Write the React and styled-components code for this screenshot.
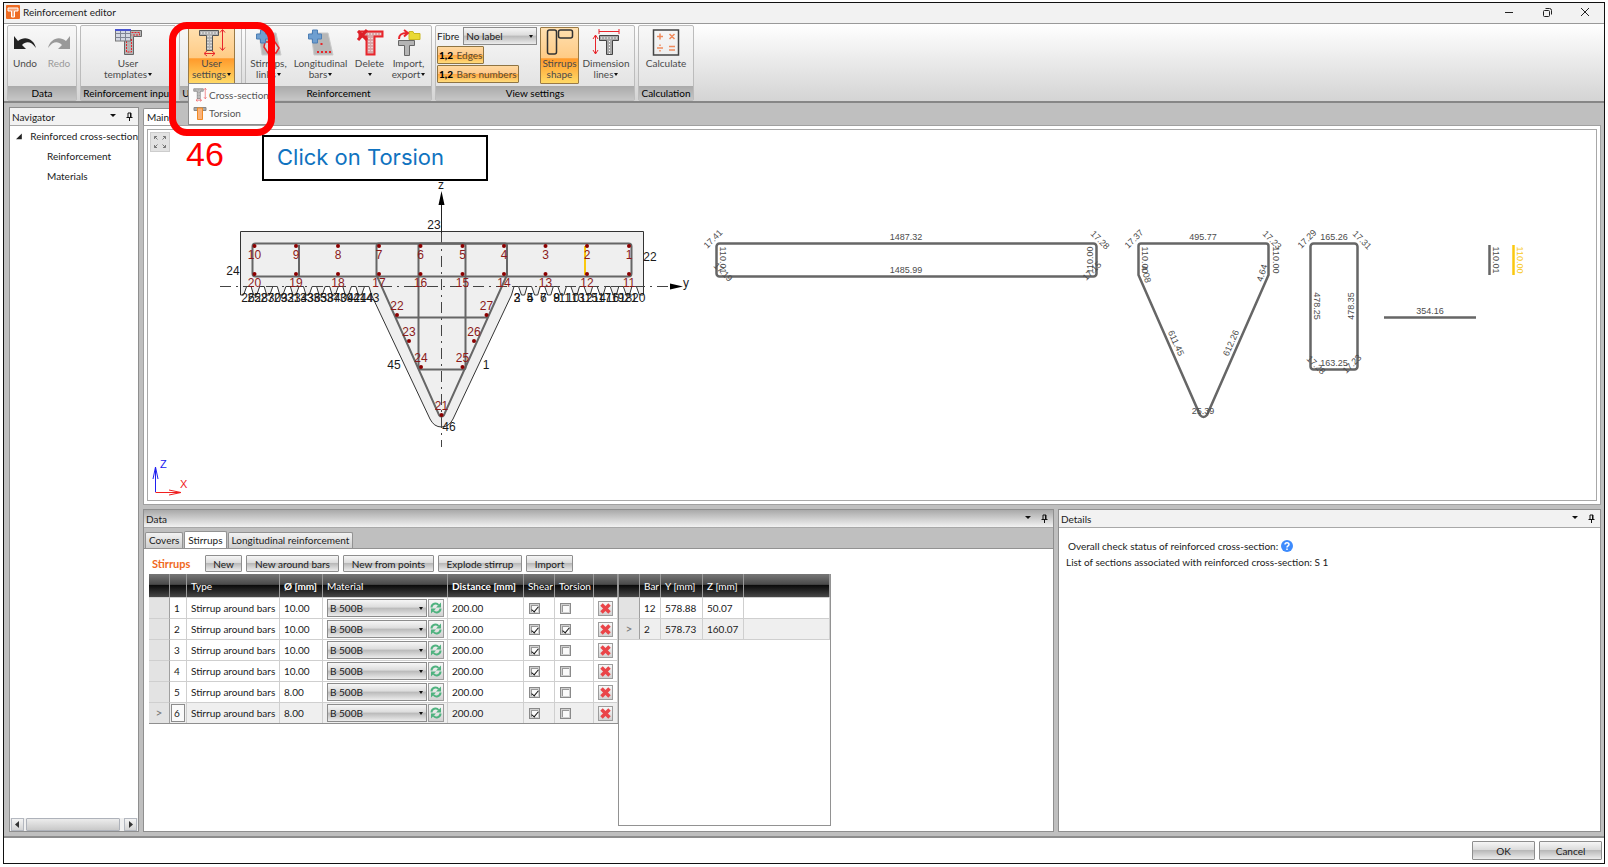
import React, { useState } from 'react';
import styled, { createGlobalStyle, css } from 'styled-components';

const GlobalStyle = createGlobalStyle`
  * {
    box-sizing: border-box;
  }

  body {
    margin: 0;
    background: #fff;
    color: #1a1a1a;
    font-family: Lato, 'Open Sans', sans-serif;
    font-size: 10px;
    line-height: 12px;
  }

  button, select, input {
    font: inherit;
    color: inherit;
    margin: 0;
  }
`;

const glossy = 'linear-gradient(#f6f6f6 0%, #dcdcdc 45%, #b9b9b9 50%, #ececec 100%)';
const orangeGlossy = 'linear-gradient(#ffe0b0 0%, #ffcb85 54%, #ff9a2b 56%, #ffd966 100%)';

const Page = styled.div`
  display: flex;
  min-height: 100vh;
  padding: 2px 3px 3px;
`;

const Window = styled.div`
  position: relative;
  display: flex;
  flex-direction: column;
  flex: 1;
  min-width: 0;
  border: 1px solid #111;
  background: #fff;
`;

const TitleBar = styled.header`
  display: flex;
  align-items: center;
  height: 21px;
  padding: 0 14px 2px 2px;
  background: #f2f2f2;
  border-bottom: 1px solid #999;
`;

const Title = styled.h1`
  flex: 1;
  margin: 0 0 0 3px;
  font-size: 10px;
  font-weight: 400;
`;

const WindowButtons = styled.div`
  display: flex;
  gap: 28px;
`;

const PlainButton = styled.button`
  display: flex;
  padding: 0;
  border: 0;
  background: none;
`;

const Ribbon = styled.div`
  display: flex;
  gap: 3px;
  padding: 1px 3px 0;
  background: linear-gradient(#fff, #d4d4d4);
  border-bottom: 2px solid #868686;
`;

const Group = styled.section`
  display: flex;
  flex-direction: column;
  width: ${props => props.$width}px;
  height: 76px;
  border: 1px solid #bcbcbc;
  border-radius: 2px;
  background: linear-gradient(#f8f8f8, #dedede);
`;

const GroupBody = styled.div`
  display: flex;
  flex: 1;
  justify-content: ${props => props.$align || 'center'};
  padding: 1px ${props => props.$pad || 0}px;
`;

const GroupLabel = styled.div`
  height: 14px;
  overflow: hidden;
  line-height: 14px;
  text-align: center;
  white-space: nowrap;
  color: #000;
  background: linear-gradient(#aaa, #c6c6c6);
`;

const RibbonButton = styled.button`
  display: flex;
  flex-direction: column;
  align-items: center;
  flex: none;
  width: ${props => props.$width}px;
  height: 57px;
  padding: 1px 0 0;
  border: 1px solid transparent;
  border-radius: 1px;
  background: none;
  line-height: 11px;
  color: ${props => (props.$dim ? '#9a9a9a' : '#4a4a4a')};
  white-space: nowrap;

  svg {
    margin-bottom: 1px;
  }

  ${props => props.$active && css`
    border-color: #9a7a45;
    background: ${orangeGlossy};
  `}
`;

const Caret = styled.span`
  display: inline-block;
  margin: 0 0 2px 1px;
  border: ${props => (props.$wide ? 3 : 2)}px solid transparent;
  border-top: 3px solid #111;
  border-bottom: 0;
`;

const ViewColumn = styled.div`
  display: flex;
  flex-direction: column;
  align-items: flex-start;
  gap: 1px;
  width: 103px;
`;

const FibreLabel = styled.label`
  display: flex;
  align-items: center;
  gap: 4px;
  width: 100px;
`;

const SelectBox = styled.span`
  position: relative;
  display: flex;
  flex: 1;
  min-width: 0;

  &::after {
    content: '';
    position: absolute;
    top: 8px;
    right: 4px;
    border: 2px solid transparent;
    border-top: 3px solid #111;
    border-bottom: 0;
    pointer-events: none;
  }
`;

const Select = styled.select`
  appearance: none;
  width: 100%;
  height: 18px;
  padding: 0 10px 0 2px;
  border: 1px solid #8c8c8c;
  border-radius: 0;
  background: ${glossy};
`;

const Toggle = styled.button`
  height: 18px;
  padding: 0 1px;
  border: 1px solid #8f7443;
  border-radius: 1px;
  background: linear-gradient(#ffd9a0 0%, #ffc98a 48%, #ffa63f 52%, #ffdc7c 100%);
  color: #5a4a30;

  b {
    margin-right: 1px;
    font-weight: 900;
    color: #000;
  }
`;

const Workspace = styled.main`
  display: grid;
  flex: 1;
  grid-template-columns: 130px minmax(0, 1fr);
  gap: 4px;
  padding: 4px 3px 4px 5px;
  background: #bfbfbf;
  border-bottom: 2px solid #8d8d8d;
`;

const Panel = styled.section`
  display: flex;
  flex-direction: column;
  min-width: 0;
  border: 1px solid #8f8f8f;
  background: #fff;
`;

const PanelHeader = styled.div`
  display: flex;
  align-items: center;
  gap: 10px;
  height: 18px;
  padding: 0 5px 0 2px;
  border-bottom: 1px solid #a8a8a8;
  background: ${props => (props.$active ? 'linear-gradient(#a9a9a9, #f2f2f2)' : '#f2f2f2')};

  h2 {
    flex: 1;
    margin: 0;
    font-size: 10px;
    font-weight: 400;
  }
`;

const Tree = styled.ul`
  flex: 1;
  margin: 0;
  padding: 0;
  overflow: hidden;
  list-style: none;
  white-space: nowrap;
`;

const TreeItem = styled.li`
  display: flex;
  align-items: center;
  gap: 8px;
  height: 20px;
  padding-left: ${props => (props.$child ? 37 : 6)}px;
`;

const ScrollBar = styled.div`
  display: flex;
  gap: 2px;
  height: 13px;
  padding: 0 1px;
  background: #f0f0f0;
`;

const ScrollButton = styled.button`
  display: flex;
  align-items: center;
  justify-content: center;
  width: 13px;
  padding: 0;
  border: 1px solid #b4b8c0;
  background: linear-gradient(#f4f4f4, #d4d4d4);
`;

const ScrollThumb = styled.div`
  flex: 1;
  margin-right: 2px;
  border: 1px solid #aeb2ba;
  border-radius: 1px;
  background: linear-gradient(#ececec, #c9c9c9);
`;

const RightSide = styled.div`
  display: flex;
  flex-direction: column;
  min-width: 0;
`;

const Tabs = styled.div`
  display: flex;
  align-items: flex-end;
  gap: 1px;
  padding-top: ${props => props.$top || 0}px;
  padding-left: ${props => props.$inset || 0}px;
`;

const Tab = styled.button`
  height: ${props => (props.$active ? 18 : 16)}px;
  margin-bottom: ${props => (props.$active ? '-1px' : '0')};
  padding: 0 3px 1px;
  border: 1px solid #929292;
  border-bottom: 0;
  border-radius: 2px 2px 0 0;
  background: ${props => (props.$active ? '#fff' : 'linear-gradient(#f2f2f2, #cfcfcf)')};
`;

const CanvasFrame = styled.div`
  flex: 1;
  padding: 3px;
  border: 1px solid #a0a0a0;
  background: #fff;
`;

const Canvas = styled.div`
  position: relative;
  height: 100%;
  border: 1px solid #a8a8a8;

  > svg {
    display: block;
    width: 100%;
    height: auto;
  }
`;

const FitButton = styled.button`
  position: absolute;
  top: 2px;
  left: 2px;
  display: flex;
  padding: 2px;
  border: 1px solid #cdcdcd;
  background: #e2e2e2;
`;

const Docks = styled.div`
  display: grid;
  grid-template-columns: minmax(0, 911fr) minmax(0, 543fr);
  gap: 4px;
  margin-top: 4px;
`;

const TabArea = styled.div`
  padding-top: 3px;
  background: #bfbfbf;
`;

const TabContent = styled.div`
  padding: 6px 4px 5px 5px;
  border-top: 1px solid #929292;
  background: #fff;
`;

const Toolbar = styled.div`
  display: flex;
  align-items: center;
  gap: 4px;
  margin-bottom: 2px;
  padding-left: 3px;

  h3 {
    width: 49px;
    margin: 0;
    font-size: 11px;
    font-weight: 700;
    color: #f0681c;
  }
`;

const GlossyButton = styled.button`
  min-width: ${props => props.$width}px;
  height: ${props => props.$height || 17}px;
  padding: 0 6px;
  border: 1px solid #8e8e8e;
  border-radius: 1px;
  background: ${glossy};
  white-space: nowrap;
`;

const Tables = styled.div`
  display: flex;
  align-items: stretch;
`;

const BarsBox = styled.div`
  width: 213px;
  height: 252px;
  border: 1px solid #929292;
  border-top: 0;
`;

const Table = styled.table`
  width: ${props => (props.$width ? props.$width + 'px' : '100%')};
  table-layout: fixed;
  border-collapse: separate;
  border-spacing: 0;
  border-bottom: 1px solid ${props => (props.$width ? '#8f8f8f' : '#cfcfcf')};
  white-space: nowrap;

  th, td {
    padding: 0 0 0 4px;
    border-right: 1px solid #cfcfcf;
    text-align: left;
    font-weight: 400;
  }
`;

const Th = styled.th`
  height: 23px;
  color: #fff;
  background: linear-gradient(#777 0%, #4a4a4a 45%, #0c0c0c 50%, #474747 100%);

  && {
    border-right-color: #9a9a9a;
    font-weight: ${props => (props.$bold ? 700 : 400)};
  }
`;

const Row = styled.tr`
  height: 21px;
  background: ${props => (props.$current ? '#efefef' : '#fff')};

  td {
    border-top: 1px solid #cfcfcf;
  }
`;

const RowHead = styled.td`
  && {
    padding: 0;
    border-right-color: #a0a0a0;
    background: #e3e3e3;
    text-align: center;
    font-size: 12px;
    color: #777;
  }
`;

const NumberCell = styled.td`
  && {
    padding: 0 1px;
  }

  span {
    display: block;
    padding: 2px;
    border: 1px solid ${props => (props.$current ? '#8c8c8c' : 'transparent')};
    background: ${props => (props.$current ? '#fafafa' : 'none')};
  }
`;

const MaterialCell = styled.div`
  display: flex;
  gap: 1px;
  padding-right: 3px;
`;

const SquareButton = styled.button`
  display: flex;
  align-items: center;
  justify-content: center;
  width: ${props => props.$width || 15}px;
  height: ${props => props.$height || 15}px;
  padding: 0;
  border: 1px solid #9c9c9c;
  background: linear-gradient(#f8f8f8, #d2d2d2);
`;

const CheckBox = styled.input`
  appearance: none;
  position: relative;
  display: block;
  width: 11px;
  height: 11px;
  margin-left: 1px;
  border: 1px solid #8a8a8a;
  background: #fafafa;
  box-shadow: inset 0 0 0 1px #d0d0d0, inset 2px 2px 0 0 #999;

  &:checked::after {
    content: '';
    position: absolute;
    top: 1px;
    left: 3px;
    width: 3px;
    height: 6px;
    border: solid #111;
    border-width: 0 1px 1px 0;
    transform: rotate(40deg);
  }
`;

const Details = styled.div`
  padding: 10px 7px;
  line-height: 16px;

  p {
    display: flex;
    align-items: center;
    gap: 3px;
    margin: 0;
  }

  p:first-child {
    padding-left: 2px;
  }
`;

const Footer = styled.footer`
  display: flex;
  justify-content: flex-end;
  gap: 4px;
  padding: 3px 2px;
`;

const Menu = styled.div`
  position: absolute;
  top: 80px;
  left: 184px;
  width: 82px;
  padding: 2px 4px;
  border: 1px solid #8c8c8c;
  background: #fcfcfc;
`;

const MenuItem = styled.button`
  display: flex;
  align-items: center;
  gap: 2px;
  width: 100%;
  height: 18px;
  padding: 0;
  border: 0;
  background: none;
  color: #555;
  white-space: nowrap;

  svg {
    flex: none;
  }
`;

const Highlight = styled.div`
  position: absolute;
  top: 19px;
  left: 165px;
  width: 106px;
  height: 114px;
  border: 7px solid #f00;
  border-radius: 18px;
  pointer-events: none;
`;

const StepNumber = styled.div`
  position: absolute;
  top: 133px;
  left: 182px;
  font-family: 'Liberation Sans', sans-serif;
  font-size: 34px;
  line-height: 36px;
  color: #f00;
`;

const Callout = styled.div`
  position: absolute;
  top: 132px;
  left: 258px;
  width: 226px;
  padding: 0 13px 2px;
  border: 2px solid #000;
  background: #fff;
  font-family: Inter, sans-serif;
  font-size: 22px;
  line-height: 40px;
  color: #0f73c0;
`;

function AppIcon() {
  return (
    <svg width="14" height="14" viewBox="0 0 14 14">
      <rect width="14" height="14" rx="1" fill="#ee6b22" />
      <path d="M2 3h10v3H8.500v6h-3V6H2z" fill="#f6a477" stroke="#fff" />
    </svg>
  );
}

function UndoIcon({ flip, color }) {
  return (
    <svg width="26" height="28" viewBox="0 0 26 28">
      <g transform={flip ? 'translate(26 0) scale(-1 1)' : undefined}>
        <path d="M2 7v13h12l-4-4c4-4 9-4 14 3C22 10 13 6 6 12z" fill={color} />
      </g>
    </svg>
  );
}

// T shaped section with two rows of bars
function Section({ x = 0, y = 0, stroke = '#555', fill = '#b4b4b4', dots = '#fff' }) {
  return (
    <g transform={`translate(${x} ${y})`}>
      <path d="M.5.500h19v5h-6v15h-6v-15h-7z" fill={fill} stroke={stroke} />
      <path d="M2 3h16M9 6v13M12 6v13" stroke={dots} strokeDasharray="1 2" fill="none" />
    </g>
  );
}

function TemplatesIcon() {
  return (
    <svg width="27" height="28" viewBox="0 0 27 28">
      <path d="M14 1.500h12.500v6h-8v18h-9v-18" fill="#b4b4b4" stroke="#666" />
      <path d="M16.500 3.500h8v2.500h-8M11.500 9v14h5V9" fill="none" stroke="#e8252b" strokeDasharray="2 1" />
      <rect x=".5" y="1" width="15" height="11" fill="#d5d9e4" stroke="#777" />
      <path d="M.5 4.500h15M.5 8.500h15M5.500 1v11M10.500 1v11" stroke="#7f8595" />
      <path d="M0 1h16" stroke="#4a55d0" strokeWidth="2" />
    </svg>
  );
}

function SettingsIcon({ size = 28 }) {
  return (
    <svg width={size} height={size} viewBox="0 0 28 28">
      <Section x={1} y={1} />
      <path d="M24.500 1v20M22 3.500l2.500-3 2.500 3M22 18.500l2.500 3 2.500-3M7 24.500h10M9 22l-3 2.500 3 2.500M14 22l3 2.500-3 2.500" stroke="#e8252b" fill="none" />
    </svg>
  );
}

function TorsionIcon() {
  return (
    <svg width="14" height="14" viewBox="0 0 14 14">
      <path d="M1 1.500h12v3H9v9H5v-9H1z" fill="#aaa" stroke="#888" />
      <path d="M4.500 2h5v11.500h-5z" fill="#f9b27a" stroke="#f08a24" />
    </svg>
  );
}

function PlateIcon({ links }) {
  return (
    <svg width="28" height="28" viewBox="0 0 28 28">
      <path d="M4 4h17l5 22H7z" fill="#b7b7b7" stroke="#cacaca" />
      {links
        ? <path d="M10 13h10l4 6-3 5h-8l-4-6z" fill="#d8d8d8" stroke="#e8252b" strokeWidth="1.500" />
        : <path d="M10 23h2M14 23h2M18 23h2M22 23h2M13.500 15h2" stroke="#e8252b" strokeWidth="2" />}
      <path d="M5.500 1h5v4h4v5h-4v4h-5v-4h-4V5h4z" fill="#6f9fd0" stroke="#4d7fb5" />
    </svg>
  );
}

function DeleteIcon() {
  return (
    <svg width="28" height="28" viewBox="0 0 28 28">
      <path d="M3.500 2.500h23v5h-8v18h-8v-18h-7z" fill="#d9a5a7" stroke="#e8252b" strokeWidth="2" />
      <path d="M13 9v15M16 9v15M12 5h13" stroke="#fff" strokeDasharray="1 2" />
      <path d="M2 2l9 9M11 1L2 11" stroke="#dd1f28" strokeWidth="3" />
    </svg>
  );
}

function ImportIcon() {
  return (
    <svg width="28" height="28" viewBox="0 0 28 28">
      <path d="M3.500 11.500h16v5h-5v10h-5v-10h-6z" fill="#b4b4b4" stroke="#666" />
      <path d="M14 2.500h4l1 2h6v6H14z" fill="#e9d935" stroke="#c9b723" />
      <path d="M4 10c0-5 3-6 8-6M9 1l4 3-4 3.500" fill="none" stroke="#e8252b" strokeWidth="2" />
    </svg>
  );
}

function ShapesIcon() {
  return (
    <svg width="28" height="28" viewBox="0 0 28 28" fill="none" stroke="#333" strokeWidth="1.500">
      <rect x="1.500" y="1" width="9" height="24" rx="2" />
      <rect x="12.500" y="1" width="14" height="8" rx="2" />
    </svg>
  );
}

function DimensionIcon() {
  return (
    <svg width="28" height="28" viewBox="0 0 28 28">
      <path d="M7.500 6.500h19v5h-6v14h-6v-14h-7z" fill="#a8a8a8" stroke="#444" />
      <path d="M9 9h16M17.500 12v13" stroke="#fff" strokeDasharray="1 2" />
      <path d="M7 2.500h20M7 0v5M27 0v5M3.500 6v19M1 10l2.500-4L6 10M1 21l2.500 4L6 21" fill="none" stroke="#e8252b" />
    </svg>
  );
}

function CalculateIcon() {
  return (
    <svg width="28" height="28" viewBox="0 0 28 28" fill="none">
      <rect x="1.500" y="1" width="25" height="25" stroke="#444" strokeWidth="1.500" />
      <path d="M5 7.500h6M8 4.500v6M17.500 5l5 5M22.500 5l-5 5M5 19h6M8 15.500v1.500M8 21v1.500M17 17.500h6M17 21h6" stroke="#f08a5c" strokeWidth="1.500" />
    </svg>
  );
}

function PinIcon() {
  return (
    <svg width="7" height="9" viewBox="0 0 7 9">
      <path d="M2 5.500V1h3v4.500M.5 5.500h6M3.500 5.500V9" stroke="#111" fill="none" />
      <path d="M4.500 1v4" stroke="#111" />
    </svg>
  );
}

function HeaderIcons() {
  return (
    <>
      <PlainButton aria-label="Window position"><Caret $wide /></PlainButton>
      <PlainButton aria-label="Auto hide"><PinIcon /></PlainButton>
    </>
  );
}

function RefreshIcon() {
  return (
    <svg width="12" height="12" viewBox="0 0 12 12">
      <path d="M1.500 5.500c0-4 5-5 7-2.500M10.500 6.500c0 4-5 5-7 2.500" stroke="#4fb27f" strokeWidth="2" fill="none" />
      <path d="M11 .5v5H6zM1 11.500v-5h5z" fill="#4fb27f" />
    </svg>
  );
}

function CrossIcon() {
  return (
    <svg width="11" height="11" viewBox="0 0 11 11">
      <path d="M1.500 1.500l8 8M9.500 1.500l-8 8" stroke="#ea4448" strokeWidth="3.500" />
    </svg>
  );
}

const AXIS = 441.5;

// half outline of the teeth under the flange, as offsets from the axis
const teeth = [];
for (let k = 0; k < 10; k++) {
  const x = 70 + k * 13.1;
  teeth.push([x, 296], [x + 2.5, 287.5], [x + 7, 287.5], [x + 10, 296]);
}

const outline = [
  [240.5, 232.5], [643.5, 232.5], [643.5, 296],
  ...teeth.map(([x, y]) => [AXIS + x, y]).reverse(),
].map(p => p.join(',')).join(' L')
  + ' L453,420 Q449,428 441.5,428 Q434,428 430,420 L'
  + [...teeth.map(([x, y]) => [AXIS - x, y]), [240.5, 296]].map(p => p.join(',')).join(' L');

const columns = [254.5, 296, 338, 379, 420.5, 462.5, 504, 545.5, 587, 629];

const lowerBars = [
  [22, 397, 316], [23, 409, 342], [24, 421, 368], [21, 441.5, 416],
  [25, 462.5, 368], [26, 474, 342], [27, 486.5, 316],
];

const edgeLabels = [
  ['23', 434, 230], ['24', 233, 276], ['22', 650, 262], ['45', 394, 370],
  ['1', 486, 370], ['46', 449, 432], ['z', 441, 190], ['y', 686, 288],
];
for (let k = 0; k < 10; k++) {
  const late = k > 3;
  edgeLabels.push([2 * k + 2, 517 + 13.2 * k + (late ? 3 : 0), 303]);
  edgeLabels.push([2 * k + 3, 517 + 13.2 * k - (late ? 5 : 0), 303]);
  edgeLabels.push([2 * k + 26, 248 + 13.2 * k, 303]);
  edgeLabels.push([2 * k + 25, 254 + 13.2 * k, 303]);
}

// text, centre x, centre y, rotation
const lengths = [
  ['1487.32', 906, 238], ['1485.99', 906, 271],
  ['17.41', 713, 240, -45], ['17.28', 1100, 241, 45],
  ['110.01', 723, 261, 90], ['110.00', 1090, 261, -90],
  ['17.19', 723, 273, 45], ['17.15', 1092, 272, -45],
  ['495.77', 1203, 238], ['17.37', 1134, 240, -45], ['17.23', 1272, 241, 45],
  ['110.00', 1145, 261, 90], ['4.08', 1146, 275, 75],
  ['110.00', 1276, 261, 90], ['4.64', 1262, 274, -72],
  ['611.45', 1176, 344, 66], ['612.26', 1231, 344, -66], ['25.39', 1203, 412],
  ['165.26', 1334, 238], ['17.29', 1307, 240, -45], ['17.31', 1362, 241, 45],
  ['478.25', 1317, 307, 90], ['478.35', 1351, 307, -90], ['163.25', 1334, 364],
  ['17.28', 1316, 366, 45], ['17.23', 1352, 365, -45],
  ['354.16', 1430, 312], ['110.01', 1496, 261, 90], ['110.00', 1520, 261, 90, '#f8c81c'],
];

function Drawing() {
  return (
    <svg viewBox="148 131 1448 369" fontFamily="'Liberation Sans', sans-serif">
      <path d={`M${outline} Z`} fill="#efefef" stroke="#333" />

      <g stroke="#444" strokeDasharray="11 5 2 5">
        <path d="M441.500 234V448" />
        <path d="M220 287.500H672" />
      </g>
      <path d="M441.500 192l-3 14h6zM683 287.500l-13-3v6z" />
      <path d="M441.500 206v28" stroke="#222" />

      <g fill="none" stroke="#666" strokeWidth="2">
        <rect x="252.500" y="244.500" width="379" height="33" rx="3" />
        <path d="M379 244.500h126q2 0 2 2V276L444 416q-2.500 3-5 0L376.500 276v-29q0-2.500 2.500-2.500z" />
        <rect x="418.500" y="244.500" width="47" height="126" rx="2" />
        <path d="M396 318.500h91M299 246v31" />
        <path d="M585 247v29" stroke="#fbc90f" />
      </g>

      <g fill="#8b0000">
        {columns.map(x => (
          <g key={x}>
            <circle cx={x} cy="247" r="2" />
            <circle cx={x} cy="275" r="2" />
          </g>
        ))}
        {lowerBars.map(([n, x, y]) => <circle key={n} cx={x} cy={y} r="2" />)}
      </g>
      <g fill="#8b1a1a" fontSize="12" textAnchor="middle">
        {columns.map((x, i) => (
          <g key={x}>
            <text x={x} y="260">{10 - i}</text>
            <text x={x} y="288">{20 - i}</text>
          </g>
        ))}
        {lowerBars.map(([n, x, y]) => <text key={n} x={x} y={y - 5}>{n}</text>)}
      </g>
      <g fill="#1a1a1a" fontSize="12" textAnchor="middle">
        {edgeLabels.map(([label, x, y]) => <text key={label + '-' + x} x={x} y={y}>{label}</text>)}
      </g>

      <g fill="none" stroke="#666" strokeWidth="2.500">
        <rect x="716.500" y="244.500" width="380" height="33" rx="3" />
        <path d="M1141 244.500h125q2.500 0 2.500 2.500V276L1207 416q-3.500 4-7 0L1138.500 276v-29q0-2.500 2.500-2.500z" />
        <rect x="1310.500" y="244.500" width="47" height="126" rx="3" />
        <path d="M1384 318.500h92M1489.500 246v30" />
        <path d="M1513.500 246v30" stroke="#fbc90f" />
      </g>
      <g fontSize="9" textAnchor="middle">
        {lengths.map(([label, x, y, angle = 0, color = '#4c4c4c'], i) => (
          <text key={i} fill={color} transform={`translate(${x} ${y}) rotate(${angle})`} y="3">{label}</text>
        ))}
      </g>

      <path d="M155.500 493v-25M153 480l2.500-12 2.500 12" fill="none" stroke="#2020f0" />
      <path d="M155.500 493.500H181M169 491l12 2.500-12 2.500" fill="none" stroke="#f02020" />
      <text x="160" y="469" fontSize="11" fill="#2020f0">Z</text>
      <text x="180" y="489" fontSize="11" fill="#f02020">X</text>
    </svg>
  );
}

const initialStirrups = [
  { id: 1, size: '10.00', shear: true, torsion: false },
  { id: 2, size: '10.00', shear: true, torsion: true },
  { id: 3, size: '10.00', shear: true, torsion: false },
  { id: 4, size: '10.00', shear: true, torsion: false },
  { id: 5, size: '8.00', shear: true, torsion: false },
  { id: 6, size: '8.00', shear: true, torsion: false },
];

const stirrupColumns = [
  ['', 21], ['', 17], ['Type', 93], ['Ø [mm]', 43, true], ['Material', 125],
  ['Distance [mm]', 76, true], ['Shear', 31], ['Torsion', 39], ['', 24],
];

const barColumns = [['', 21], ['Bar', 21], ['Y [mm]', 42], ['Z [mm]', 41], ['', 86]];

const bars = [
  { bar: 12, y: '578.88', z: '50.07' },
  { bar: 2, y: '578.73', z: '160.07' },
];

function TableHead({ columns }) {
  return (
    <>
      <colgroup>
        {columns.map(([, width], i) => <col key={i} width={width} />)}
      </colgroup>
      <thead>
        <tr>
          {columns.map(([name, , bold], i) => <Th key={i} $bold={bold}>{name}</Th>)}
        </tr>
      </thead>
    </>
  );
}

function StirrupTable() {
  const [rows, setRows] = useState(initialStirrups);

  const toggle = (id, field) => {
    setRows(rows.map(row => (row.id === id ? { ...row, [field]: !row[field] } : row)));
  };

  return (
    <Table $width={469}>
      <TableHead columns={stirrupColumns} />
      <tbody>
        {rows.map(row => (
          <Row key={row.id} $current={row.id === 6}>
            <RowHead>{row.id === 6 ? '>' : ''}</RowHead>
            <NumberCell $current={row.id === 6}><span>{row.id}</span></NumberCell>
            <td>Stirrup around bars</td>
            <td>{row.size}</td>
            <td>
              <MaterialCell>
                <SelectBox>
                  <Select aria-label={`Material of stirrup ${row.id}`}>
                    <option>B 500B</option>
                  </Select>
                </SelectBox>
                <SquareButton $width={16} $height={18} aria-label="Edit material"><RefreshIcon /></SquareButton>
              </MaterialCell>
            </td>
            <td>200.00</td>
            <td>
              <CheckBox type="checkbox" aria-label="Shear" checked={row.shear} onChange={() => toggle(row.id, 'shear')} />
            </td>
            <td>
              <CheckBox type="checkbox" aria-label="Torsion" checked={row.torsion} onChange={() => toggle(row.id, 'torsion')} />
            </td>
            <td><SquareButton aria-label="Delete stirrup"><CrossIcon /></SquareButton></td>
          </Row>
        ))}
      </tbody>
    </Table>
  );
}

function BarTable() {
  return (
    <Table>
      <TableHead columns={barColumns} />
      <tbody>
        {bars.map(row => (
          <Row key={row.bar} $current={row.bar === 2}>
            <RowHead>{row.bar === 2 ? '>' : ''}</RowHead>
            <td>{row.bar}</td>
            <td>{row.y}</td>
            <td>{row.z}</td>
            <td />
          </Row>
        ))}
      </tbody>
    </Table>
  );
}

function RibbonBar() {
  return (
    <Ribbon>
      <Group $width={70}>
        <GroupBody>
          <RibbonButton $width={34}><UndoIcon color="#222" />Undo</RibbonButton>
          <RibbonButton $width={34} $dim><UndoIcon flip color="#999" />Redo</RibbonButton>
        </GroupBody>
        <GroupLabel>Data</GroupLabel>
      </Group>
      <Group $width={96}>
        <GroupBody>
          <RibbonButton $width={60}>
            <TemplatesIcon />
            <span>User<br />templates<Caret /></span>
          </RibbonButton>
        </GroupBody>
        <GroupLabel>Reinforcement input</GroupLabel>
      </Group>
      <Group $width={63}>
        <GroupBody $align="flex-end" $pad={6}>
          <RibbonButton $width={47} $active>
            <SettingsIcon />
            <span>User<br />settings<Caret /></span>
          </RibbonButton>
        </GroupBody>
        <GroupLabel>User settings</GroupLabel>
      </Group>
      <Group $width={187}>
        <GroupBody>
          <RibbonButton $width={42}>
            <PlateIcon links />
            <span>Stirrups,<br />links<Caret /></span>
          </RibbonButton>
          <RibbonButton $width={62}>
            <PlateIcon />
            <span>Longitudinal<br />bars<Caret /></span>
          </RibbonButton>
          <RibbonButton $width={36}>
            <DeleteIcon />
            <span>Delete<br /><Caret /></span>
          </RibbonButton>
          <RibbonButton $width={42}>
            <ImportIcon />
            <span>Import,<br />export<Caret /></span>
          </RibbonButton>
        </GroupBody>
        <GroupLabel>Reinforcement</GroupLabel>
      </Group>
      <Group $width={200}>
        <GroupBody $align="flex-start" $pad={1}>
          <ViewColumn>
            <FibreLabel>
              Fibre
              <SelectBox>
                <Select><option>No label</option></Select>
              </SelectBox>
            </FibreLabel>
            <Toggle aria-pressed="true"><b>1,2</b> Edges</Toggle>
            <Toggle aria-pressed="true"><b>1,2</b> Bars numbers</Toggle>
          </ViewColumn>
          <RibbonButton $width={39} $active>
            <ShapesIcon />
            <span>Stirrups<br />shape</span>
          </RibbonButton>
          <RibbonButton $width={54}>
            <DimensionIcon />
            <span>Dimension<br />lines<Caret /></span>
          </RibbonButton>
        </GroupBody>
        <GroupLabel>View settings</GroupLabel>
      </Group>
      <Group $width={56}>
        <GroupBody>
          <RibbonButton $width={54}><CalculateIcon />Calculate</RibbonButton>
        </GroupBody>
        <GroupLabel>Calculation</GroupLabel>
      </Group>
    </Ribbon>
  );
}

function Navigator() {
  return (
    <Panel>
      <PanelHeader><h2>Navigator</h2><HeaderIcons /></PanelHeader>
      <Tree>
        <TreeItem>
          <svg width="7" height="7" viewBox="0 0 7 7"><path d="M6.500 0v6.500H0z" fill="#222" /></svg>
          Reinforced cross-section
        </TreeItem>
        <TreeItem $child>Reinforcement</TreeItem>
        <TreeItem $child>Materials</TreeItem>
      </Tree>
      <ScrollBar>
        <ScrollButton aria-label="Scroll left">
          <svg width="5" height="7" viewBox="0 0 5 7"><path d="M4 0v7L0 3.500z" fill="#333" /></svg>
        </ScrollButton>
        <ScrollThumb />
        <ScrollButton aria-label="Scroll right">
          <svg width="5" height="7" viewBox="0 0 5 7"><path d="M1 0v7l4-3.500z" fill="#333" /></svg>
        </ScrollButton>
      </ScrollBar>
    </Panel>
  );
}

export default function App() {
  return (
    <Page>
      <GlobalStyle />
      <Window>
        <TitleBar>
          <AppIcon />
          <Title>Reinforcement editor</Title>
          <WindowButtons>
            <PlainButton aria-label="Minimize">
              <svg width="10" height="10" viewBox="0 0 10 10"><path d="M1 5.500h8" stroke="#222" /></svg>
            </PlainButton>
            <PlainButton aria-label="Restore">
              <svg width="10" height="10" viewBox="0 0 10 10" fill="none" stroke="#222">
                <rect x="1.500" y="3.500" width="6" height="6" rx="1" />
                <path d="M3.500 1.500h4q2 0 2 2v4" />
              </svg>
            </PlainButton>
            <PlainButton aria-label="Close">
              <svg width="10" height="10" viewBox="0 0 10 10"><path d="M1 1l8 8M9 1L1 9" stroke="#222" /></svg>
            </PlainButton>
          </WindowButtons>
        </TitleBar>

        <RibbonBar />

        <Workspace>
          <Navigator />
          <RightSide>
            <Tabs $top={1}><Tab $active>Main</Tab></Tabs>
            <CanvasFrame>
              <Canvas>
                <Drawing />
                <FitButton aria-label="Zoom to fit">
                  <svg width="14" height="14" viewBox="0 0 14 14" fill="none" stroke="#777">
                    <path d="M1.500 4V1.500H4M1.500 1.500l3 3M10 1.500h2.500V4M12.500 1.500l-3 3M1.500 10v2.500H4M1.500 12.500l3-3M10 12.500h2.500V10M12.500 12.500l-3-3" />
                  </svg>
                </FitButton>
              </Canvas>
            </CanvasFrame>
            <Docks>
              <Panel>
                <PanelHeader $active><h2>Data</h2><HeaderIcons /></PanelHeader>
                <TabArea>
                  <Tabs $inset={1}>
                    <Tab>Covers</Tab>
                    <Tab $active>Stirrups</Tab>
                    <Tab>Longitudinal reinforcement</Tab>
                  </Tabs>
                </TabArea>
                <TabContent>
                  <Toolbar>
                    <h3>Stirrups</h3>
                    <GlossyButton $width={37}>New</GlossyButton>
                    <GlossyButton $width={93}>New around bars</GlossyButton>
                    <GlossyButton $width={91}>New from points</GlossyButton>
                    <GlossyButton $width={84}>Explode stirrup</GlossyButton>
                    <GlossyButton $width={47}>Import</GlossyButton>
                  </Toolbar>
                  <Tables>
                    <div><StirrupTable /></div>
                    <BarsBox><BarTable /></BarsBox>
                  </Tables>
                </TabContent>
              </Panel>
              <Panel>
                <PanelHeader><h2>Details</h2><HeaderIcons /></PanelHeader>
                <Details>
                  <p>
                    Overall check status of reinforced cross-section:
                    <svg width="12" height="12" viewBox="0 0 12 12">
                      <circle cx="6" cy="6" r="6" fill="#3d8bfd" />
                      <path d="M4 4.500c0-2.500 4-2.500 4 0C8 6 6 5.800 6 7.500M6 8.500V10" fill="none" stroke="#fff" strokeWidth="1.500" />
                    </svg>
                  </p>
                  <p>List of sections associated with reinforced cross-section: S 1</p>
                </Details>
              </Panel>
            </Docks>
          </RightSide>
        </Workspace>

        <Footer>
          <GlossyButton $width={63} $height={19}>OK</GlossyButton>
          <GlossyButton $width={63} $height={19}>Cancel</GlossyButton>
        </Footer>

        <Menu>
          <MenuItem><SettingsIcon size={14} />Cross-section</MenuItem>
          <MenuItem><TorsionIcon />Torsion</MenuItem>
        </Menu>
        <Highlight />
        <StepNumber>46</StepNumber>
        <Callout>Click on Torsion</Callout>
      </Window>
    </Page>
  );
}
